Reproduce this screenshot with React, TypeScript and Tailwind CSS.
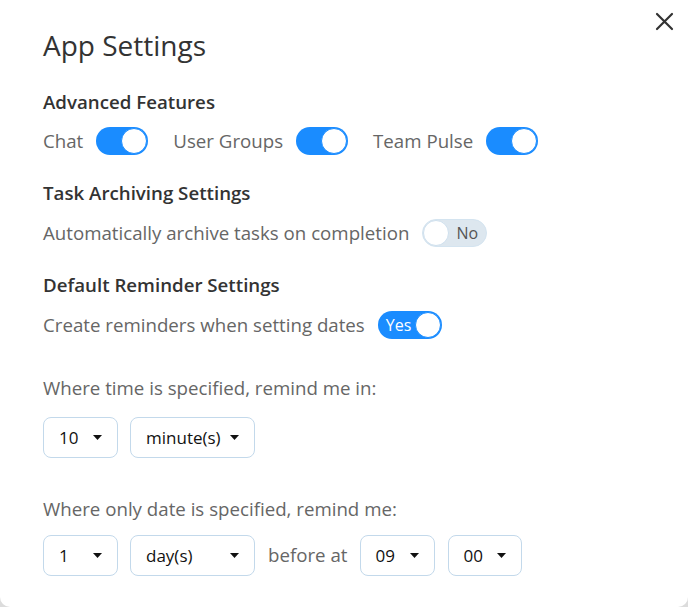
import React from "react";

function Toggle({ on, label }: { on: boolean; label?: string }) {
  if (on) {
    return (
      <div className="flex h-[28px] items-center rounded-full bg-[#1a8cff] p-[1px]">
        {label && <span className="pl-[7px] pr-[4px] text-[16px] leading-none text-white">{label}</span>}
        {!label && <span className="w-[24px]" />}
        <span className="h-[26px] w-[26px] rounded-full border border-[#1a8cff] bg-white" />
      </div>
    );
  }
  return (
    <div className="flex h-[28px] items-center rounded-full border border-[#d4e4f0] bg-[#dde7ef]">
      <span className="h-[26px] w-[26px] rounded-full border border-[#cfe0ee] bg-white" />
      <span className="pl-[7px] pr-[8px] text-[16px] leading-none text-[#555]">{label}</span>
    </div>
  );
}

function Caret() {
  return (
    <svg width="9" height="5" viewBox="0 0 9 5">
      <path d="M0 0 L9 0 L4.5 5 Z" fill="#111" />
    </svg>
  );
}

function Select({ value, width }: { value: string; width: string }) {
  return (
    <div
      className={`flex h-[41px] items-center justify-between rounded-[8px] border border-[#c3d9eb] bg-white pl-[15px] pr-[15px] ${width}`}
    >
      <span className="text-[17px] text-[#111]">{value}</span>
      <Caret />
    </div>
  );
}

export default function App() {
  return (
    <div
      className="h-[607px] w-[688px] bg-[#dcdcdc]"
      style={{ fontFamily: '"Open Sans", "Noto Sans", sans-serif' }}
    >
      <div className="relative h-full w-full rounded-b-[10px] bg-white pl-[43px]">
        <button className="absolute right-[13px] top-[11px] p-[1px]">
          <svg width="19" height="19" viewBox="0 0 19 19">
            <path d="M2 2 L17 17 M17 2 L2 17" stroke="#333" strokeWidth="2.2" strokeLinecap="round" />
          </svg>
        </button>

        <div className="flex flex-col">
          <h1 className="mt-[28px] h-[34px] text-[28px] leading-[34px] text-[#333]">App Settings</h1>

          <h2 className="mt-[26px] h-[28px] text-[18.7px] font-semibold leading-[28px] text-[#333]">Advanced Features</h2>
          <div className="mt-[10px] flex h-[30px] items-center text-[18.7px] text-[#666]">
            <span>Chat</span>
            <div className="ml-[13px] mr-[25px]"><Toggle on /></div>
            <span>User Groups</span>
            <div className="ml-[13px] mr-[25px]"><Toggle on /></div>
            <span>Team Pulse</span>
            <div className="ml-[13px]"><Toggle on /></div>
          </div>

          <h2 className="mt-[23px] h-[28px] text-[18.7px] font-semibold leading-[28px] text-[#333]">Task Archiving Settings</h2>
          <div className="mt-[11px] flex h-[30px] items-center text-[18.7px] text-[#666]">
            <span>Automatically archive tasks on completion</span>
            <div className="ml-[13px]"><Toggle on={false} label="No" /></div>
          </div>

          <h2 className="mt-[23px] h-[28px] text-[18.7px] font-semibold leading-[28px] text-[#333]">Default Reminder Settings</h2>
          <div className="mt-[11px] flex h-[30px] items-center text-[18.7px] text-[#666]">
            <span>Create reminders when setting dates</span>
            <div className="ml-[13px]"><Toggle on label="Yes" /></div>
          </div>

          <p className="mt-[34px] h-[28px] text-[18.7px] leading-[28px] text-[#666]">Where time is specified, remind me in:</p>
          <div className="mt-[15px] flex items-center gap-[12px]">
            <Select value="10" width="w-[75px]" />
            <Select value="minute(s)" width="w-[125px]" />
          </div>

          <p className="mt-[37px] h-[28px] text-[18.7px] leading-[28px] text-[#666]">Where only date is specified, remind me:</p>
          <div className="mt-[12px] flex items-center">
            <Select value="1" width="w-[75px]" />
            <div className="ml-[12px]"><Select value="day(s)" width="w-[125px]" /></div>
            <span className="ml-[13px] mr-[12px] text-[18.7px] text-[#666]">before at</span>
            <Select value="09" width="w-[75px]" />
            <div className="ml-[13px]"><Select value="00" width="w-[74px]" /></div>
          </div>
        </div>
      </div>
    </div>
  );
}
